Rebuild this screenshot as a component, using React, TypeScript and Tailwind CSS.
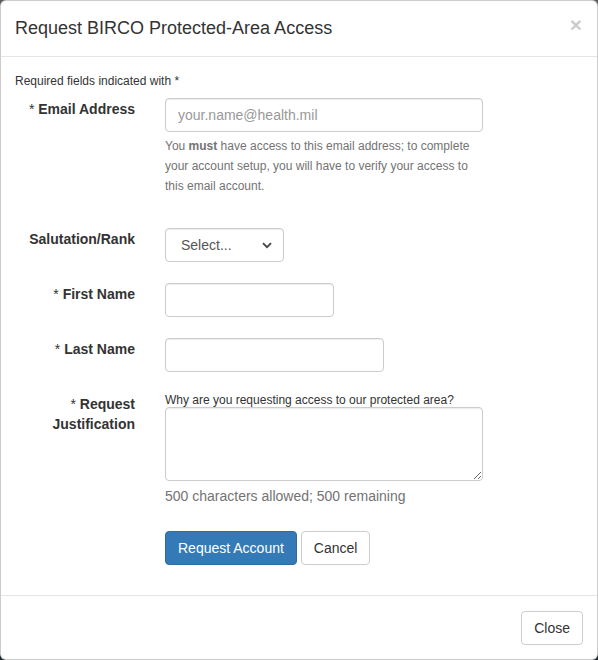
import { useState } from "react";

const font = { fontFamily: '"Liberation Sans", Arial, Helvetica, sans-serif' };

const inputCls =
  "h-[34px] rounded-[4px] border border-[#ccc] bg-white px-3 text-[14px] text-[#555] shadow-[inset_0_1px_1px_rgba(0,0,0,0.075)] outline-none placeholder:text-[#999]";

interface RowProps {
  label: React.ReactNode;
  required?: boolean;
  children: React.ReactNode;
  className?: string;
}

const FormRow = ({ label, required, children, className = "" }: RowProps) => (
  <div className={`flex ${className}`}>
    <label className="w-[120px] shrink-0 pt-[1px] text-right text-[14px] font-bold leading-[20px] text-[#333]">
      {required && <span className="font-normal">* </span>}
      {label}
    </label>
    <div className="ml-[30px] w-[318px]">{children}</div>
  </div>
);

const App = () => {
  const [reason, setReason] = useState("");
  const remaining = 500 - reason.length;

  return (
    <div
      className="h-[660px] w-[598px] bg-linear-to-b from-[#5c5c5c] to-[#1b2a31]"
      style={font}
    >
      <div className="flex h-full w-full flex-col rounded-[6px] border border-black/20 bg-white text-[#333]">
        {/* Header */}
        <div className="flex items-start justify-between border-b border-[#e5e5e5] px-[14px] pt-[14px] pb-[15px]">
          <h4 className="text-[18px] leading-[26px] font-normal">
            Request BIRCO Protected-Area Access
          </h4>
          <button className="mt-[-1px] mr-[1px] text-[21px] leading-none font-bold text-black opacity-20">
            ×
          </button>
        </div>

        {/* Body */}
        <div className="flex-1 px-[14px] pt-[15px]">
          <p className="mb-[8px] text-[12px] leading-[18px]">Required fields indicated with *</p>

          <FormRow label="Email Address" required className="mb-[32px]">
            <input className={`${inputCls} w-[318px]`} placeholder="your.name@health.mil" />
            <p className="mt-[4px] text-[12px] leading-[20px] text-[#737373]">
              You <b className="font-bold">must</b> have access to this email address; to complete
              <br />
              your account setup, you will have to verify your access to
              <br />
              this email account.
            </p>
          </FormRow>

          <FormRow label="Salutation/Rank" className="mb-[21px]">
            <div className="relative w-[119px]">
              <select className={`${inputCls} w-[119px] appearance-none pl-[15px]`} defaultValue="">
                <option value="">Select...</option>
                <option>Mr.</option>
                <option>Ms.</option>
                <option>Dr.</option>
              </select>
              <svg
                className="pointer-events-none absolute top-[14px] right-[12px]"
                width="10"
                height="7"
                viewBox="0 0 10 7"
              >
                <path d="M1 1.2 5 5.2 9 1.2" fill="none" stroke="#444" strokeWidth="1.8" />
              </svg>
            </div>
          </FormRow>

          <FormRow label="First Name" required className="mb-[21px]">
            <input className={`${inputCls} w-[169px]`} />
          </FormRow>

          <FormRow label="Last Name" required className="mb-[21px]">
            <input className={`${inputCls} w-[219px]`} />
          </FormRow>

          <FormRow
            label={
              <>
                Request
                <br />
                Justification
              </>
            }
            required
            className="mb-[25px]"
          >
            <p className="text-[12px] leading-[14px]">
              Why are you requesting access to our protected area?
            </p>
            <textarea
              className={`${inputCls} block h-[74px] w-[318px] py-[6px]`}
              maxLength={500}
              value={reason}
              onChange={(e) => setReason(e.target.value)}
            />
            <p className="mt-[5px] text-[14px] leading-[20px] text-[#737373]">
              500 characters allowed; {remaining} remaining
            </p>
          </FormRow>

          <div className="ml-[150px] flex gap-[4px]">
            <button className="h-[34px] rounded-[4px] border border-[#2e6da4] bg-[#337ab7] px-[12px] text-[14px] text-white">
              Request Account
            </button>
            <button className="h-[34px] rounded-[4px] border border-[#ccc] bg-white px-[12px] text-[14px] text-[#333]">
              Cancel
            </button>
          </div>
        </div>

        {/* Footer */}
        <div className="flex justify-end border-t border-[#e5e5e5] px-[14px] pt-[15px] pb-[14px]">
          <button className="h-[34px] rounded-[4px] border border-[#ccc] bg-white px-[12px] text-[14px] text-[#333]">
            Close
          </button>
        </div>
      </div>
    </div>
  );
};

export default App;
